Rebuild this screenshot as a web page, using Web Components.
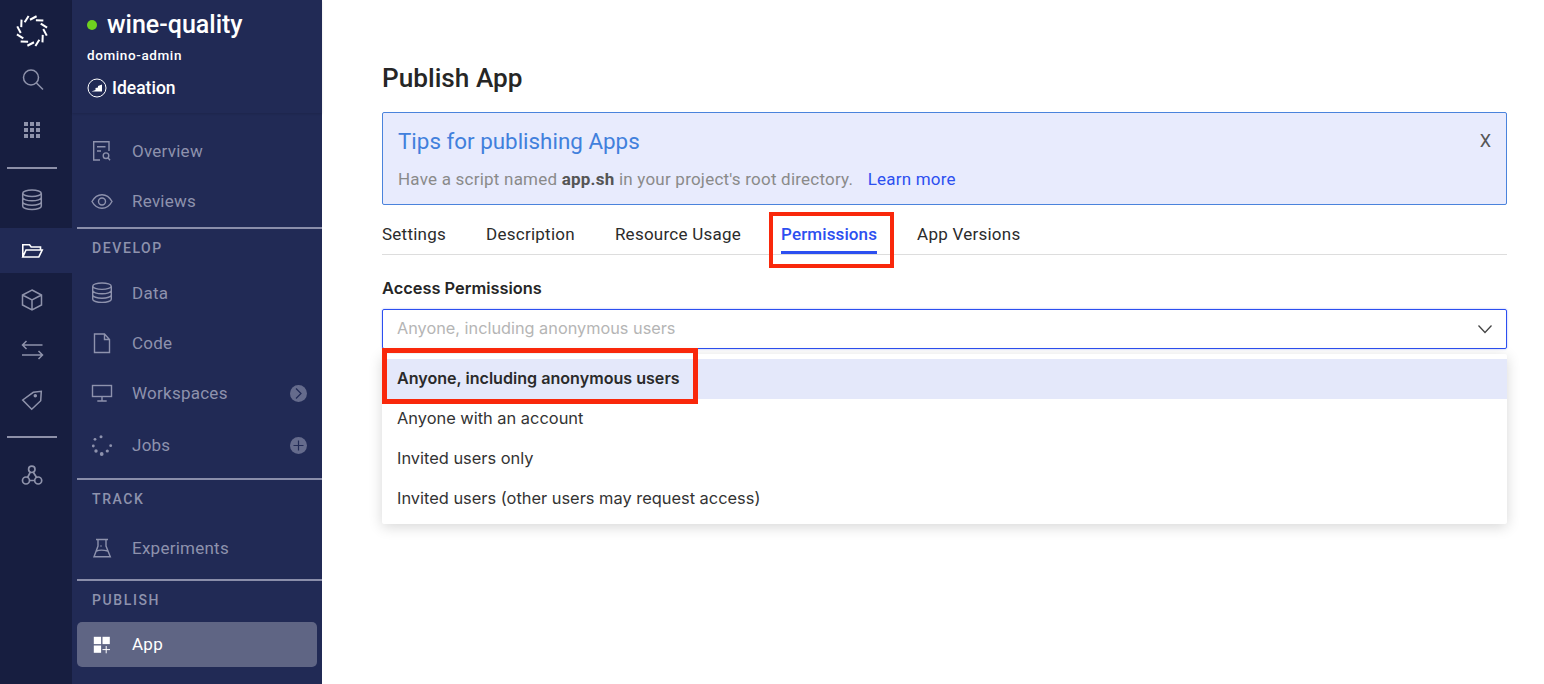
<!DOCTYPE html>
<html><head><meta charset="utf-8">
<style>
html,body{margin:0;padding:0;height:100%;background:#fff}
body{font-family:Roboto,"Liberation Sans",sans-serif;overflow:hidden}
</style></head><body>
<dom-app>
  <app-rail slot="rail"></app-rail>
  <side-nav slot="nav"></side-nav>
  <publish-panel slot="main"></publish-panel>
</dom-app>
<script>
const dot=(x,y,r)=>`<circle cx="${x}" cy="${y}" r="${r}" fill="currentColor" stroke="none"/>`;
const ICONS={
 search:'<circle cx="11" cy="9.500" r="7.500"/><path d="M16.500 15l6.500 6.500"/>',
 grid:(()=>{let s='';for(let y=0;y<3;y++)for(let x=0;x<3;x++)s+=`<rect x="${4+x*6}" y="${4+y*6}" width="4" height="4" fill="currentColor" stroke="none"/>`;return s})(),
 db:'<ellipse cx="12" cy="5.200" rx="9.300" ry="3.200"/><path d="M2.700 5.200v13c0 1.800 4.200 3.200 9.300 3.200s9.300-1.400 9.300-3.200v-13M2.700 9.600c0 1.800 4.200 3.200 9.300 3.200s9.300-1.400 9.300-3.200M2.700 14c0 1.800 4.200 3.200 9.300 3.200s9.300-1.400 9.300-3.200"/>',
 folder:'<path d="M2.800 18V5.700h6.700l1.700 2.300h9.300v3M2.800 18h16L22.200 11H6z"/>',
 cube:'<path d="M12 2l9.500 5v10L12 22l-9.500-5V7zM2.500 7l9.500 5 9.500-5M12 12v10"/>',
 arrows:'<path d="M22.500 7H2.500M6.500 3l-4 4 4 4M2 17h20.500M18.500 13l4 4-4 4"/>',
 tag:'<path d="M2.700 12L13.300 4.300l8-1-.6 9.400-9 8.600z"/><circle cx="15.300" cy="7.700" r="1" fill="currentColor"/>',
 hub:'<circle cx="11.800" cy="5.300" r="3.200"/><circle cx="6" cy="16.500" r="3.500"/><circle cx="18.200" cy="16.500" r="3.500"/><path d="M10.300 8.200L7.600 13.500M13.300 8.200L16.600 13.500M9.500 16.500h5.200"/>',
 overview:'<path d="M19 12V2.700H3.700V21H10M7 7.700h8.500M7 12h4"/><circle cx="16" cy="16.700" r="2.800"/><path d="M18 18.800l2 2.500"/>',
 eye:'<path d="M2 12.500C4.500 8 8 5.700 12 5.700s7.500 2.300 10 6.800c-2.500 4.500-6 6.800-10 6.800S4.500 17 2 12.500z"/><circle cx="12" cy="12.500" r="3.500"/>',
 file:'<path d="M4.500 3h10l5 5.500v13h-15zM14.500 3v5.500h5"/>',
 monitor:'<rect x="2.500" y="4.500" width="19" height="11"/><path d="M12 15.500V20M7.300 20h9.400"/>',
 jobs:dot(11,3.700,1.500)+dot(5,6.300,1.400)+dot(3.300,13,1.400)+dot(6,18,1.700)+dot(11.700,21,1.900)+dot(17.300,18,1.600)+dot(20.700,12.700,1.400),
 flask:'<path d="M6 3.500h12M8 3.500V10L4 20.700h16.300L16 10V3.500M6.300 15c3-1.200 7-1.200 11.500 0"/>'+dot(11,10,.8),
 appgrid:'<rect x="3.800" y="3.800" width="7.300" height="7.300" fill="currentColor" stroke="none"/><rect x="12.500" y="3.800" width="7.300" height="7.300" fill="currentColor" stroke="none"/><rect x="3.800" y="12.500" width="7.300" height="7.300" fill="currentColor" stroke="none"/><path d="M16.200 13v7.300M12.500 16.600h7.500" stroke-width="1"/>'
};
function svg(name,size=24,sw=1.5){return `<svg width="${size}" height="${size}" viewBox="0 0 24 24" fill="none" stroke="currentColor" stroke-width="${sw}" aria-hidden="true">${ICONS[name]}</svg>`}

class DomApp extends HTMLElement{constructor(){super();this.attachShadow({mode:'open'}).innerHTML=`<style>
:host{display:flex;width:1544px;height:684px;overflow:hidden}
</style><slot name="rail"></slot><slot name="nav"></slot><slot name="main"></slot>`}}
customElements.define('dom-app',DomApp);

class AppRail extends HTMLElement{constructor(){super();
let dashes='';
for(let i=0;i<12;i++){dashes+=`<path transform="rotate(${i*30} 18 18)" d="M16 6.750L22.600 3.250"/>`}
this.attachShadow({mode:'open'}).innerHTML=`<style>
:host{display:flex;flex-direction:column;flex:none;width:72px;height:684px;background:#171e40;color:#8f93ab}
.logo{height:56px;display:flex;align-items:center;justify-content:center;padding-top:5px;box-sizing:border-box;margin-left:-8px}
.cell{display:flex;align-items:center;justify-content:center;margin-left:-8px;box-sizing:border-box}
.rule{height:2px;width:50px;background:#8d90a8;margin-left:7px}
.cell.on{height:45px;margin-left:0;padding-right:8px;background:#212a55;color:#fff}
</style>
<div class="logo"><svg width="36" height="36" viewBox="0 0 36 36" fill="none" stroke="#fff" stroke-width="2">${dashes}</svg></div>
<div class="cell" style="height:48px">${svg('search',24,1.500)}</div>
<div class="cell" style="height:52px">${svg('grid',24)}</div>
<div class="rule" style="margin-top:11px"></div>
<div class="cell" style="height:59px;padding-top:3px">${svg('db',24,1.500)}</div>
<div class="cell on">${svg('folder',24,1.600)}</div>
<div class="cell" style="height:54px">${svg('cube',24,1.500)}</div>
<div class="cell" style="height:46px">${svg('arrows',24,1.500)}</div>
<div class="cell" style="height:54px">${svg('tag',24,1.500)}</div>
<div class="rule" style="margin-top:9px"></div>
<div class="cell" style="height:76px">${svg('hub',24,1.700)}</div>
`}}
customElements.define('app-rail',AppRail);

class NavItem extends HTMLElement{constructor(){super();
const ic=this.getAttribute('icon'),h=this.getAttribute('h')||50,b=this.getAttribute('badge');
const badge=b==='go'?`<svg class="b" width="17" height="17" viewBox="0 0 17 17"><circle cx="8.500" cy="8.500" r="8.500" fill="#656b8c"/><path d="M6 3.500l5 5-5 5" fill="none" stroke="#212a55" stroke-width="1.200"/></svg>`
 :b==='add'?`<svg class="b" width="17" height="17" viewBox="0 0 17 17"><circle cx="8.500" cy="8.500" r="8.500" fill="#656b8c"/><path d="M3.500 8.500h10M8.500 3.500v10" fill="none" stroke="#212a55" stroke-width="1.200"/></svg>`:'';
this.attachShadow({mode:'open'}).innerHTML=`<style>
:host{display:flex;align-items:center;height:${h}px;margin-left:5px;width:240px;padding:0 10px 0 13px;box-sizing:border-box;color:#8e92ad;font-size:17px;letter-spacing:.25px;border-radius:5px}
:host([active]){background:#5f6584;color:#fff}
:host([active]) .t{margin-top:-2px}
.i{width:42px;flex:none;display:flex}
.t{flex:1}
.b{display:block}
</style><span class="i">${svg(ic,24,1.400)}</span><span class="t"><slot></slot></span>${badge}`}}
customElements.define('nav-item',NavItem);

class NavHead extends HTMLElement{constructor(){super();
this.attachShadow({mode:'open'}).innerHTML=`<style>
:host{display:block;margin-left:5px;border-top:2px solid #8a8eaa;padding-left:15px;font-size:14px;font-weight:500;letter-spacing:1.600px;color:#8e92ad;box-sizing:border-box;line-height:38px;height:var(--h)}
</style><slot></slot>`;}}
customElements.define('nav-head',NavHead);

class SideNav extends HTMLElement{constructor(){super();
this.attachShadow({mode:'open'}).innerHTML=`<style>
:host{display:block;flex:none;width:250px;height:684px;background:#212a55;color:#fff}
.head{height:113px;box-sizing:border-box;padding:10px 0 0 15px;box-shadow:0 1px 2px rgba(0,0,0,.12)}
.name{display:flex;align-items:center;height:29px;font-size:25px;font-weight:500;line-height:29px}
.dot{width:10px;height:10px;border-radius:50%;background:#6fd11f;margin-right:10px;flex:none}
.owner{font-size:13.500px;font-weight:500;letter-spacing:.6px;margin-top:8px;line-height:16px}
.stage{display:flex;align-items:center;font-size:17.500px;font-weight:500;margin-top:14px;line-height:22px}
.stage svg{margin-right:5px}
.gap{height:13px}
.g6{height:6px}
.g1{height:1px}
</style>
<div class="head">
 <div class="name"><span class="dot"></span>wine-quality</div>
 <div class="owner">domino-admin</div>
 <div class="stage"><svg width="20" height="20" viewBox="0 0 20 20"><circle cx="10" cy="10" r="9" fill="none" stroke="#fff" stroke-width="1"/><path d="M4.500 13.500l4-1.500V10l2.500-.5V8l4-1.500v7z" fill="#fff"/></svg>Ideation</div>
</div>
<div class="gap"></div>
<nav-item icon="overview">Overview</nav-item>
<nav-item icon="eye">Reviews</nav-item>
<div class="g1"></div>
<nav-head style="--h:41px">DEVELOP</nav-head>
<nav-item icon="db">Data</nav-item>
<nav-item icon="file">Code</nav-item>
<nav-item icon="monitor" badge="go">Workspaces</nav-item>
<nav-item icon="jobs" h="54" badge="add">Jobs</nav-item>
<div class="g6"></div>
<nav-head style="--h:45px">TRACK</nav-head>
<nav-item icon="flask">Experiments</nav-item>
<div class="g6"></div>
<nav-head style="--h:43px">PUBLISH</nav-head>
<nav-item icon="appgrid" h="45" active>App</nav-item>
`}}
customElements.define('side-nav',SideNav);

class TipAlert extends HTMLElement{constructor(){super();
this.attachShadow({mode:'open'}).innerHTML=`<style>
:host{display:block;position:relative;height:93px;box-sizing:border-box;background:#e8ebfd;border:1px solid #4a83dc;border-radius:2px;padding:14px 15px 0;margin-top:19px}
h2{margin:0;font-size:22.400px;font-weight:400;line-height:28px;color:#4180dc}
p{margin:15px 0 0;font-size:17px;line-height:19px;color:#8a8a8a;letter-spacing:.22px}
b{font-weight:700;color:#555}
a{color:#2c4ff0;margin-left:10px;text-decoration:none}
.x{position:absolute;right:15px;top:18px;font-size:18px;color:#555;line-height:20px}
</style><h2>Tips for publishing Apps</h2><p>Have a script named <b>app.sh</b> in your project's root directory. <a>Learn more</a></p><span class="x">X</span>`}}
customElements.define('tip-alert',TipAlert);

class TabBar extends HTMLElement{constructor(){super();
this.attachShadow({mode:'open'}).innerHTML=`<style>
:host{display:flex;gap:40px;height:50px;box-sizing:border-box;border-bottom:1px solid #ddd;font-size:17px;letter-spacing:.25px;color:#2b2b2b;position:relative}
span{display:block;padding-top:19px;line-height:20px;height:27px}
.on{color:#2c4ff0;font-weight:500;border-bottom:3px solid #2c4ff0;letter-spacing:.12px}
.mark{position:absolute;left:387px;top:7px;width:125px;height:56px;box-sizing:border-box;border:4px solid #f9280b}
</style><span>Settings</span><span>Description</span><span>Resource Usage</span><span class="on">Permissions</span><span>App Versions</span><i class="mark"></i>`}}
customElements.define('tab-bar',TabBar);

class PermSelect extends HTMLElement{constructor(){super();
this.attachShadow({mode:'open'}).innerHTML=`<style>
:host{display:block;position:relative;font-family:Inter,Roboto,sans-serif;font-size:16.400px}
label{display:block;font-weight:600;color:#262626;line-height:20px;margin-top:23px}
.box{height:40px;box-sizing:border-box;margin-top:11px;border:1px solid #2c4ff0;border-radius:2px;box-shadow:0 0 2px rgba(44,79,240,.45);display:flex;align-items:center;justify-content:space-between;padding:0 13px 0 14px;color:#b5b5b5;font-size:16.300px;line-height:18px}
.box span{margin-top:-2px}
.menu{position:absolute;left:0;right:0;top:76px;background:#fff;border-radius:2px;box-shadow:0 3px 14px rgba(0,0,0,.16);padding:5px 0}
.o{height:40px;box-sizing:border-box;padding:0 0 2px 15px;display:flex;align-items:center;color:#333}
.o.s{background:#e4e8fa;font-weight:600;color:#2a2a2a;font-size:16.100px}
.mark{position:absolute;left:0;top:70px;width:316px;height:56px;box-sizing:border-box;border:5px solid #f9280b}
</style><label>Access Permissions</label>
<div class="box"><span>Anyone, including anonymous users</span><svg width="16" height="10" viewBox="0 0 16 10" fill="none" stroke="#444" stroke-width="1.300"><path d="M1.500 1.500L8 8.500l6.500-7"/></svg></div>
<div class="menu"><div class="o s">Anyone, including anonymous users</div><div class="o">Anyone with an account</div><div class="o">Invited users only</div><div class="o">Invited users (other users may request access)</div></div>
<i class="mark"></i>`}}
customElements.define('perm-select',PermSelect);

class PublishPanel extends HTMLElement{constructor(){super();
this.attachShadow({mode:'open'}).innerHTML=`<style>
:host{display:block;width:1125px;margin-left:60px;padding-top:63px}
h1{margin:0;font-size:26.200px;font-weight:500;line-height:30px;color:#262626}
</style><h1>Publish App</h1><tip-alert></tip-alert><tab-bar></tab-bar><perm-select></perm-select>`}}
customElements.define('publish-panel',PublishPanel);
</script>
</body></html>
